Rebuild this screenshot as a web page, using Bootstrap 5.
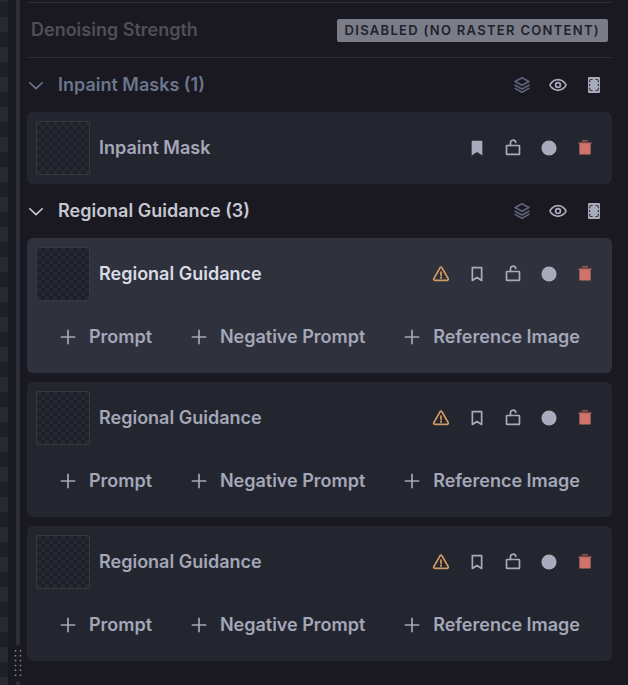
<!DOCTYPE html>
<html lang="en" data-bs-theme="dark">
<head>
<meta charset="utf-8">
<meta name="viewport" content="width=device-width, initial-scale=1">
<title>Canvas layers</title>
<link href="https://cdn.jsdelivr.net/npm/bootstrap@5.3.0/dist/css/bootstrap.min.css" rel="stylesheet">
<style>
  body { background: #1a1820; color: #a4a7b9; font: 600 18px/26px Inter, sans-serif; }
  .canvas-strip { width: 8px; background: repeating-linear-gradient(#1d2028 0 15px, #272a31 15px 30px) 0 2px; }
  .splitter { width: 19px; padding-left: 1px; }
  .splitter-line { width: 4px; background: #2c2e39; }
  .splitter-line.upper { border-radius: 0 0 2px 2px; }
  .splitter-line.lower { border-radius: 2px 2px 0 0; height: 4px; }
  .panel { padding: 2px 16px 24px 0; }
  .setting { height: 56px; padding: 0 4px; border: solid #2e2d38; border-width: 1px 0; color: #4e4f59; }
  .state { background: #7a7c88; color: #1f222b; border-radius: 2px; font: 600 13px/23px Inter, sans-serif; letter-spacing: 0.1em; padding: 0 8px; }
  .group-head { height: 54px; color: #6a758e; }
  .group-head.current { color: #c5c8d3; }
  .toggle { color: inherit; font: inherit; gap: 13px; }
  .icon-btn { width: 36px; height: 36px; color: inherit; }
  .tools { color: #a8abbc; }
  .dim { color: #5d6379; }
  .danger { color: #d0746b; }
  .warn { color: #d29b63; }
  .layers { gap: 9px; }
  .layer { background: #23262e; border-radius: 6px; }
  .layer.selected { background: #2f313c; }
  .layer.selected .layer-name { color: #d9dbe5; }
  .layer-row { padding: 9px; gap: 9px; }
  .thumb { width: 54px; height: 54px; border: 1px solid #37393f; border-radius: 2px;
    background: repeating-conic-gradient(#1d2028 0 25%, #262931 0 50%) 0 0 / 8px 8px; }
  .adders { padding: 9px 32px 18px 32px; }
  .adder { height: 36px; color: inherit; font: inherit; gap: 12px; }
  svg { display: block; width: 18px; height: 18px; fill: none; stroke: currentColor; stroke-width: 24; stroke-linecap: round; stroke-linejoin: round; }
  svg .solid { fill: currentColor; stroke: none; }
  .grip { width: 8px; height: 29px; margin: 3px 0; }
</style>
</head>
<body>
<svg class="d-none" aria-hidden="true">
  <symbol id="caret" viewBox="0 0 256 256"><path d="M40 96l88 84 88-84"/></symbol>
  <symbol id="plus" viewBox="0 0 256 256"><path d="M34 128h188M128 34v188"/></symbol>
  <symbol id="stack" viewBox="0 0 256 256"><path d="M128 24l98 54-98 54-98-54zM30 130l98 54 98-54M30 176l98 54 98-54"/></symbol>
  <symbol id="eye" viewBox="0 0 256 256"><path d="M128 52C44 52 14 128 14 128s30 76 114 76 114-76 114-76-30-76-114-76z"/><circle cx="128" cy="128" r="34"/></symbol>
  <symbol id="mask" viewBox="0 0 18 18"><rect class="solid" x="3" y="1" width="12" height="16" rx="1"/><path stroke="#2b2e3a" stroke-width="1.1" stroke-linecap="butt" d="M7.6 3.5H6.4Q4.6 3.5 4.6 5.3V6.3M10.4 3.5h1.2q1.8 0 1.8 1.8V6.3M4.6 11.7v1q0 1.8 1.8 1.8h1.2M13.4 11.7v1q0 1.8-1.8 1.8h-1.2M4.6 8v2M13.4 8v2"/></symbol>
  <symbol id="bookmark" viewBox="0 0 256 256"><path d="M62 36h132v184l-66-42-66 42z"/></symbol>
  <symbol id="bookmark-fill" viewBox="0 0 256 256"><path class="solid" d="M64 26h128q12 0 12 12v196l-76-48-76 48V38q0-12 12-12z"/></symbol>
  <symbol id="lock" viewBox="0 0 256 256"><rect x="36" y="92" width="184" height="126" rx="6"/><path d="M92 92V56c0-48 66-52 76-8"/></symbol>
  <symbol id="dot" viewBox="0 0 256 256"><circle class="solid" cx="128" cy="128" r="108"/></symbol>
  <symbol id="trash" viewBox="0 0 256 256"><path class="solid" d="M48 62h160v146q0 12-12 12H60q-12 0-12-12z"/><path stroke-width="14" d="M40 57h176M92 26h72"/></symbol>
  <symbol id="warning" viewBox="0 0 256 256"><path d="M114 40q14-20 28 0l88 154q8 22-16 24H42q-24-2-16-24zM128 100v44"/><circle class="solid" cx="128" cy="180" r="16"/></symbol>
</svg>

<div class="d-flex min-vh-100">
  <div class="canvas-strip flex-shrink-0"></div>
  <div class="splitter d-flex flex-column align-items-center flex-shrink-0">
    <div class="splitter-line upper flex-grow-1"></div>
    <svg class="grip" viewBox="0 0 8 29" aria-hidden="true"><path stroke="#8488a0" stroke-width="1.5" stroke-linecap="butt" stroke-dasharray="1.5 3.4" d="M1.5 1v27M6.5 1v27"/></svg>
    <div class="splitter-line lower"></div>
  </div>
  <main class="panel flex-grow-1">
    <div class="setting d-flex align-items-center justify-content-between">
      <span>Denoising Strength</span>
      <span class="state">DISABLED (NO RASTER CONTENT)</span>
    </div>

    <section>
      <div class="group-head d-flex align-items-center justify-content-between">
        <button class="toggle btn border-0 p-0 d-flex align-items-center"><svg><use href="#caret"/></svg>Inpaint Masks (1)</button>
        <div class="tools d-flex">
          <button class="icon-btn dim btn border-0 p-0 d-flex align-items-center justify-content-center" aria-label="Merge visible"><svg><use href="#stack"/></svg></button>
          <button class="icon-btn btn border-0 p-0 d-flex align-items-center justify-content-center" aria-label="Toggle visibility"><svg><use href="#eye"/></svg></button>
          <button class="icon-btn btn border-0 p-0 d-flex align-items-center justify-content-center" aria-label="Add mask"><svg><use href="#mask"/></svg></button>
        </div>
      </div>
      <div class="layers d-flex flex-column">
        <article class="layer">
          <div class="layer-row d-flex align-items-center">
            <div class="thumb flex-shrink-0"></div>
            <span class="layer-name flex-grow-1">Inpaint Mask</span>
            <div class="tools d-flex">
              <button class="icon-btn btn border-0 p-0 d-flex align-items-center justify-content-center" aria-label="Bookmarked"><svg><use href="#bookmark-fill"/></svg></button>
              <button class="icon-btn btn border-0 p-0 d-flex align-items-center justify-content-center" aria-label="Lock"><svg><use href="#lock"/></svg></button>
              <button class="icon-btn btn border-0 p-0 d-flex align-items-center justify-content-center" aria-label="Enabled"><svg><use href="#dot"/></svg></button>
              <button class="icon-btn danger btn border-0 p-0 d-flex align-items-center justify-content-center" aria-label="Delete"><svg><use href="#trash"/></svg></button>
            </div>
          </div>
        </article>
      </div>
    </section>

    <section>
      <div class="group-head current d-flex align-items-center justify-content-between">
        <button class="toggle btn border-0 p-0 d-flex align-items-center"><svg><use href="#caret"/></svg>Regional Guidance (3)</button>
        <div class="tools d-flex">
          <button class="icon-btn dim btn border-0 p-0 d-flex align-items-center justify-content-center" aria-label="Merge visible"><svg><use href="#stack"/></svg></button>
          <button class="icon-btn btn border-0 p-0 d-flex align-items-center justify-content-center" aria-label="Toggle visibility"><svg><use href="#eye"/></svg></button>
          <button class="icon-btn btn border-0 p-0 d-flex align-items-center justify-content-center" aria-label="Add region"><svg><use href="#mask"/></svg></button>
        </div>
      </div>
      <div class="layers d-flex flex-column">
        <article class="layer selected">
          <div class="layer-row d-flex align-items-center">
            <div class="thumb flex-shrink-0"></div>
            <span class="layer-name flex-grow-1">Regional Guidance</span>
            <div class="tools d-flex">
              <button class="icon-btn warn btn border-0 p-0 d-flex align-items-center justify-content-center" aria-label="Warnings"><svg><use href="#warning"/></svg></button>
              <button class="icon-btn btn border-0 p-0 d-flex align-items-center justify-content-center" aria-label="Bookmark"><svg><use href="#bookmark"/></svg></button>
              <button class="icon-btn btn border-0 p-0 d-flex align-items-center justify-content-center" aria-label="Lock"><svg><use href="#lock"/></svg></button>
              <button class="icon-btn btn border-0 p-0 d-flex align-items-center justify-content-center" aria-label="Enabled"><svg><use href="#dot"/></svg></button>
              <button class="icon-btn danger btn border-0 p-0 d-flex align-items-center justify-content-center" aria-label="Delete"><svg><use href="#trash"/></svg></button>
            </div>
          </div>
          <div class="adders d-flex justify-content-between">
            <button class="adder btn border-0 p-0 d-flex align-items-center"><svg><use href="#plus"/></svg>Prompt</button>
            <button class="adder btn border-0 p-0 d-flex align-items-center"><svg><use href="#plus"/></svg>Negative Prompt</button>
            <button class="adder btn border-0 p-0 d-flex align-items-center"><svg><use href="#plus"/></svg>Reference Image</button>
          </div>
        </article>
        <article class="layer">
          <div class="layer-row d-flex align-items-center">
            <div class="thumb flex-shrink-0"></div>
            <span class="layer-name flex-grow-1">Regional Guidance</span>
            <div class="tools d-flex">
              <button class="icon-btn warn btn border-0 p-0 d-flex align-items-center justify-content-center" aria-label="Warnings"><svg><use href="#warning"/></svg></button>
              <button class="icon-btn btn border-0 p-0 d-flex align-items-center justify-content-center" aria-label="Bookmark"><svg><use href="#bookmark"/></svg></button>
              <button class="icon-btn btn border-0 p-0 d-flex align-items-center justify-content-center" aria-label="Lock"><svg><use href="#lock"/></svg></button>
              <button class="icon-btn btn border-0 p-0 d-flex align-items-center justify-content-center" aria-label="Enabled"><svg><use href="#dot"/></svg></button>
              <button class="icon-btn danger btn border-0 p-0 d-flex align-items-center justify-content-center" aria-label="Delete"><svg><use href="#trash"/></svg></button>
            </div>
          </div>
          <div class="adders d-flex justify-content-between">
            <button class="adder btn border-0 p-0 d-flex align-items-center"><svg><use href="#plus"/></svg>Prompt</button>
            <button class="adder btn border-0 p-0 d-flex align-items-center"><svg><use href="#plus"/></svg>Negative Prompt</button>
            <button class="adder btn border-0 p-0 d-flex align-items-center"><svg><use href="#plus"/></svg>Reference Image</button>
          </div>
        </article>
        <article class="layer">
          <div class="layer-row d-flex align-items-center">
            <div class="thumb flex-shrink-0"></div>
            <span class="layer-name flex-grow-1">Regional Guidance</span>
            <div class="tools d-flex">
              <button class="icon-btn warn btn border-0 p-0 d-flex align-items-center justify-content-center" aria-label="Warnings"><svg><use href="#warning"/></svg></button>
              <button class="icon-btn btn border-0 p-0 d-flex align-items-center justify-content-center" aria-label="Bookmark"><svg><use href="#bookmark"/></svg></button>
              <button class="icon-btn btn border-0 p-0 d-flex align-items-center justify-content-center" aria-label="Lock"><svg><use href="#lock"/></svg></button>
              <button class="icon-btn btn border-0 p-0 d-flex align-items-center justify-content-center" aria-label="Enabled"><svg><use href="#dot"/></svg></button>
              <button class="icon-btn danger btn border-0 p-0 d-flex align-items-center justify-content-center" aria-label="Delete"><svg><use href="#trash"/></svg></button>
            </div>
          </div>
          <div class="adders d-flex justify-content-between">
            <button class="adder btn border-0 p-0 d-flex align-items-center"><svg><use href="#plus"/></svg>Prompt</button>
            <button class="adder btn border-0 p-0 d-flex align-items-center"><svg><use href="#plus"/></svg>Negative Prompt</button>
            <button class="adder btn border-0 p-0 d-flex align-items-center"><svg><use href="#plus"/></svg>Reference Image</button>
          </div>
        </article>
      </div>
    </section>
  </main>
</div>
<script src="https://cdn.jsdelivr.net/npm/bootstrap@5.3.0/dist/js/bootstrap.bundle.min.js"></script>
</body>
</html>
